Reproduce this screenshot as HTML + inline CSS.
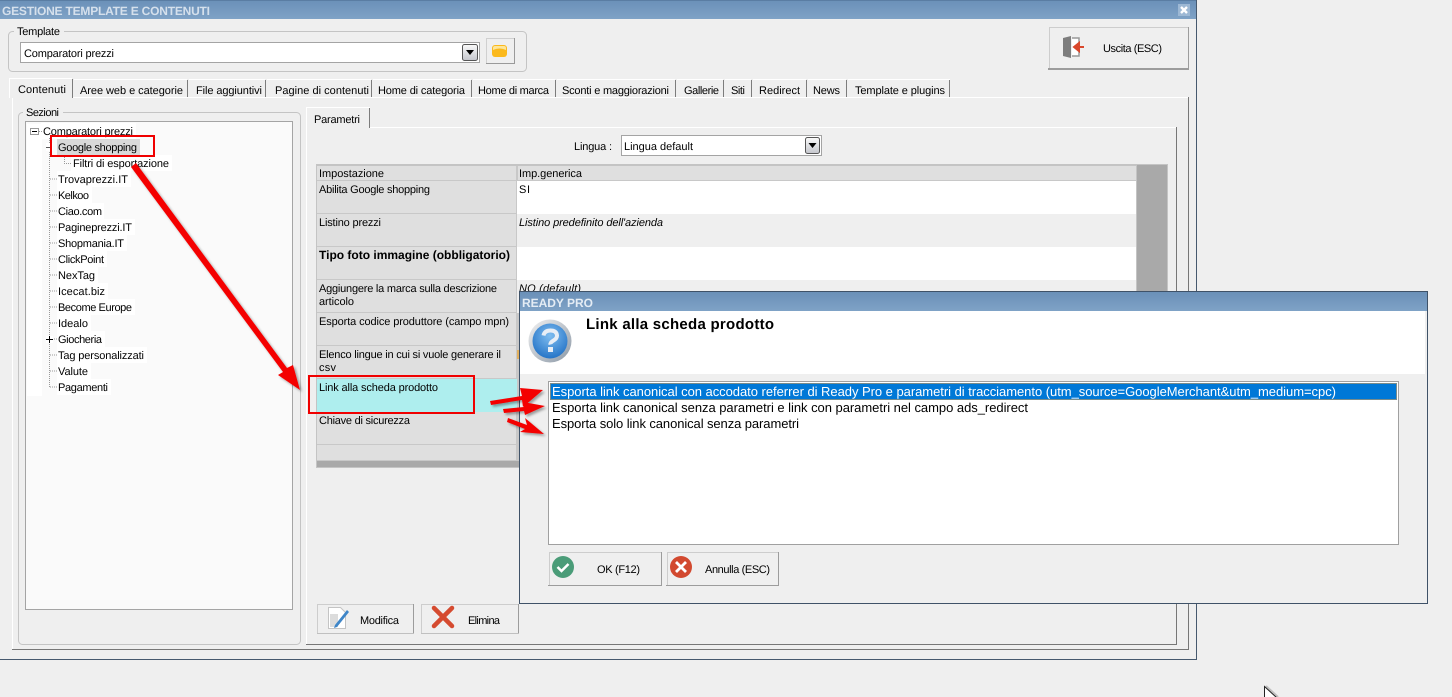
<!DOCTYPE html>
<html><head><meta charset="utf-8"><title>Gestione template e contenuti</title>
<style>
html,body{margin:0;padding:0;background:#efefef;width:1452px;height:697px;overflow:hidden}
svg{display:block}
text{font-family:"Liberation Sans",sans-serif;font-size:11px;fill:#000;text-rendering:geometricPrecision}
.c{shape-rendering:crispEdges}
.b{font-weight:bold}
.i{font-style:italic}
.d{font-size:13px}
</style></head><body>
<svg width="1452" height="697" viewBox="0 0 1452 697" xmlns="http://www.w3.org/2000/svg">
<defs>
<linearGradient id="tb" x1="0" y1="0" x2="0" y2="1"><stop offset="0" stop-color="#6a90b8"/><stop offset="1" stop-color="#7fa2c6"/></linearGradient>
<linearGradient id="cb" x1="0" y1="0" x2="0" y2="1"><stop offset="0" stop-color="#fafafa"/><stop offset="1" stop-color="#c4c6cc"/></linearGradient>
<radialGradient id="q" cx=".5" cy=".35" r=".7"><stop offset="0" stop-color="#7fbdf0"/><stop offset="1" stop-color="#1f6fc4"/></radialGradient>
<linearGradient id="qr" x1="0" y1="0" x2="1" y2="1"><stop offset="0" stop-color="#f2f2f2"/><stop offset="1" stop-color="#8b98a6"/></linearGradient>
<filter id="sh" x="-20%" y="-20%" width="140%" height="140%"><feDropShadow dx="2" dy="2" stdDeviation="1.2" flood-color="#000" flood-opacity=".35"/></filter>
</defs>

<rect width="1452" height="697" fill="#efefef"/>

<!-- main window -->
<rect x="0" y="0" width="1196" height="19" fill="url(#tb)" class="c"/>
<rect x="0" y="0" width="1196" height="1" fill="#5a7da3" class="c"/>
<rect x="1196" y="0" width="1" height="660" fill="#46596e" class="c"/>
<rect x="0" y="659" width="1197" height="1" fill="#46596e" class="c"/>
<text x="2" y="15" class="b" style="font-size:12px;fill:#d5e0ec" textLength="208" lengthAdjust="spacing">GESTIONE TEMPLATE E CONTENUTI</text>
<rect x="1178" y="4" width="12" height="12" fill="#9db8d4" class="c"/>
<path d="M1181 7l6 6M1187 7l-6 6" stroke="#fff" stroke-width="2.4" fill="none"/>

<!-- template group -->
<rect x="8.500" y="31.500" width="518" height="40" rx="4" fill="none" stroke="#c4c4c4"/>
<rect x="14" y="28" width="50" height="8" fill="#efefef" class="c"/>
<text x="17" y="35" textLength="43">Template</text>
<rect x="20.500" y="42.500" width="459" height="20" fill="#fff" stroke="#a4a4a4" class="c"/>
<text x="24" y="57" textLength="90">Comparatori prezzi</text>
<rect x="462.500" y="44.500" width="15" height="16" rx="2" fill="url(#cb)" stroke="#555"/>
<path d="M466 50h8l-4 5z" fill="#000"/>
<rect x="486" y="38" width="29" height="26" fill="#efefef" class="c"/>
<rect x="486" y="38" width="29" height="1" fill="#d0d0d0" class="c"/>
<rect x="486" y="38" width="1" height="26" fill="#d0d0d0" class="c"/>
<rect x="514" y="38" width="1" height="26" fill="#9a9a9a" class="c"/>
<rect x="486" y="63" width="29" height="1" fill="#9a9a9a" class="c"/>
<rect x="492" y="45" width="15" height="12" rx="3" fill="#fbb91c"/>
<path d="M493 50q6.500-3 13 0v-2q0-2-2-2h-9q-2 0-2 2z" fill="#fde69a"/>

<!-- exit button -->
<rect x="1049" y="27" width="140" height="42" fill="#efefef" class="c"/>
<rect x="1049" y="27" width="140" height="1" fill="#cdcdcd" class="c"/>
<rect x="1049" y="27" width="1" height="42" fill="#cdcdcd" class="c"/>
<rect x="1188" y="27" width="1" height="42" fill="#9c9c9c" class="c"/>
<rect x="1048" y="68" width="141" height="2" fill="#9c9c9c" class="c"/>
<path d="M1072 38h7v18h-7" fill="#fff" stroke="#999" stroke-width="1.500"/>
<path d="M1063 38l8-2v22l-8-2z" fill="#7d7d7d"/>
<path d="M1084 47h-7M1079 43l-5 4 5 4z" stroke="#d9472b" stroke-width="2" fill="#d9472b"/>
<text x="1103" y="52" textLength="59">Uscita (ESC)</text>

<!-- outer tab panel -->
<rect x="12" y="97" width="1" height="553" fill="#fff" class="c"/>
<rect x="12" y="97" width="1177" height="1" fill="#fff" class="c"/>
<rect x="1188" y="97" width="1" height="553" fill="#777" class="c"/>
<rect x="12" y="649" width="1177" height="1" fill="#777" class="c"/>

<!-- tabs -->
<g class="c" fill="#fff">
<rect x="74" y="79" width="113" height="1"/><rect x="189" y="79" width="76" height="1"/><rect x="267" y="79" width="104" height="1"/><rect x="373" y="79" width="98" height="1"/><rect x="473" y="79" width="82" height="1"/><rect x="557" y="79" width="118" height="1"/><rect x="677" y="79" width="46" height="1"/><rect x="725" y="79" width="26" height="1"/><rect x="753" y="79" width="53" height="1"/><rect x="808" y="79" width="38" height="1"/><rect x="848" y="79" width="102" height="1"/>
</g>
<g class="c" fill="#7c7c7c">
<rect x="187" y="80" width="1" height="17"/><rect x="265" y="80" width="1" height="17"/><rect x="371" y="80" width="1" height="17"/><rect x="471" y="80" width="1" height="17"/><rect x="555" y="80" width="1" height="17"/><rect x="675" y="80" width="1" height="17"/><rect x="723" y="80" width="1" height="17"/><rect x="751" y="80" width="1" height="17"/><rect x="806" y="80" width="1" height="17"/><rect x="846" y="80" width="1" height="17"/><rect x="949" y="80" width="1" height="17"/>
</g>
<rect x="9" y="78" width="63" height="20" fill="#efefef" class="c"/>
<rect x="9" y="78" width="63" height="1" fill="#fff" class="c"/>
<rect x="9" y="78" width="1" height="20" fill="#fff" class="c"/>
<rect x="72" y="79" width="1" height="19" fill="#7c7c7c" class="c"/>
<text x="18" y="93" textLength="48">Contenuti</text>
<text x="80" y="94" textLength="103">Aree web e categorie</text>
<text x="196" y="94" textLength="66">File aggiuntivi</text>
<text x="275" y="94" textLength="94">Pagine di contenuti</text>
<text x="378" y="94" textLength="87">Home di categoria</text>
<text x="478" y="94" textLength="71">Home di marca</text>
<text x="562" y="94" textLength="107">Sconti e maggiorazioni</text>
<text x="684" y="94" textLength="35">Gallerie</text>
<text x="731" y="94" textLength="14">Siti</text>
<text x="759" y="94" textLength="41">Redirect</text>
<text x="813" y="94" textLength="27">News</text>
<text x="855" y="94" textLength="90">Template e plugins</text>

<!-- Sezioni group -->
<rect x="18.500" y="112.500" width="282" height="532" rx="4" fill="none" stroke="#c4c4c4"/>
<rect x="23" y="108" width="40" height="8" fill="#efefef" class="c"/>
<text x="26" y="116" textLength="33">Sezioni</text>
<rect x="25.500" y="121.500" width="267" height="488" fill="#fafafa" stroke="#a4a4a4" class="c"/>
<rect x="27" y="124" width="15" height="272" fill="#fff" class="c"/>
<g fill="#fff" class="c">
<rect x="41" y="123" width="95" height="16"/><rect x="71" y="155" width="101" height="16"/><rect x="57" y="171" width="74" height="16"/><rect x="57" y="187" width="35" height="16"/><rect x="57" y="203" width="47" height="16"/><rect x="57" y="219" width="78" height="16"/><rect x="57" y="235" width="70" height="16"/><rect x="57" y="251" width="50" height="16"/><rect x="57" y="267" width="41" height="16"/><rect x="57" y="283" width="51" height="16"/><rect x="57" y="299" width="78" height="16"/><rect x="57" y="315" width="34" height="16"/><rect x="57" y="331" width="48" height="16"/><rect x="57" y="347" width="90" height="16"/><rect x="57" y="363" width="34" height="16"/><rect x="57" y="379" width="54" height="16"/>
</g>
<rect x="57" y="139" width="83" height="16" fill="#d9d9d9" class="c"/>
<path d="M49.500 138V387M50 179h7M50 195h7M50 211h7M50 227h7M50 243h7M50 259h7M50 275h7M50 291h7M50 307h7M50 323h7M50 339h7M50 355h7M50 371h7M50 387h7M39 131.500h4M64.500 155v8M64 163.500h8" stroke="#999" stroke-dasharray="1 1" fill="none" class="c"/>
<rect x="30.500" y="128.500" width="8" height="6" fill="#fff" stroke="#999" class="c"/>
<path d="M32 131.500h5" stroke="#000" class="c"/>
<rect x="46" y="143" width="7" height="8" fill="#fff" class="c"/>
<path d="M46 147.500h6" stroke="#555" class="c"/>
<rect x="46" y="336" width="7" height="7" fill="#fff" class="c"/>
<path d="M46 339.500h7M49.500 336v7" stroke="#000" class="c"/>
<text x="43" y="135" textLength="90">Comparatori prezzi</text>
<text x="58" y="151" textLength="79">Google shopping</text>
<text x="73" y="167" textLength="96">Filtri di esportazione</text>
<text x="58" y="183" textLength="70">Trovaprezzi.IT</text>
<text x="58" y="199" textLength="31">Kelkoo</text>
<text x="58" y="215" textLength="44">Ciao.com</text>
<text x="58" y="231" textLength="74">Pagineprezzi.IT</text>
<text x="58" y="247" textLength="66">Shopmania.IT</text>
<text x="58" y="263" textLength="46">ClickPoint</text>
<text x="58" y="279" textLength="37">NexTag</text>
<text x="58" y="295" textLength="47">Icecat.biz</text>
<text x="58" y="311" textLength="74">Become Europe</text>
<text x="58" y="327" textLength="30">Idealo</text>
<text x="58" y="343" textLength="44">Giocheria</text>
<text x="58" y="359" textLength="86">Tag personalizzati</text>
<text x="58" y="375" textLength="30">Valute</text>
<text x="58" y="391" textLength="50">Pagamenti</text>

<!-- inner tab -->
<rect x="306" y="127" width="870" height="1" fill="#fff" class="c"/>
<rect x="306" y="127" width="1" height="518" fill="#fff" class="c"/>
<rect x="1176" y="127" width="1" height="518" fill="#777" class="c"/>
<rect x="306" y="644" width="871" height="1" fill="#777" class="c"/>
<rect x="306" y="107" width="64" height="21" fill="#efefef" class="c"/>
<rect x="306" y="107" width="64" height="1" fill="#fff" class="c"/>
<rect x="306" y="107" width="1" height="21" fill="#fff" class="c"/>
<rect x="369" y="108" width="1" height="20" fill="#7c7c7c" class="c"/>
<text x="314" y="123" textLength="46">Parametri</text>

<!-- lingua -->
<text x="574" y="150" textLength="38">Lingua :</text>
<rect x="621.500" y="135.500" width="200" height="20" fill="#fff" stroke="#a4a4a4" class="c"/>
<text x="624" y="150" textLength="69">Lingua default</text>
<rect x="805.500" y="137.500" width="14" height="16" rx="2" fill="url(#cb)" stroke="#555"/>
<path d="M808.500 143h8l-4 5z" fill="#000"/>

<!-- table -->
<rect x="316" y="164" width="852" height="304" fill="#c4c4c4" class="c"/>
<rect x="317" y="166" width="819" height="295" fill="#c8c8c8" class="c"/>
<g fill="#dfdfdf" class="c">
<rect x="317" y="166" width="199" height="14"/><rect x="518" y="166" width="618" height="14"/>
<rect x="317" y="181" width="199" height="32"/><rect x="317" y="214" width="199" height="32"/><rect x="317" y="247" width="199" height="32"/><rect x="317" y="280" width="199" height="32"/><rect x="317" y="313" width="199" height="32"/><rect x="317" y="346" width="199" height="32"/><rect x="317" y="412" width="199" height="32"/><rect x="317" y="445" width="199" height="15"/>
</g>
<rect x="317" y="379" width="200" height="33" fill="#aeeeee" class="c"/>
<rect x="517" y="181" width="619" height="33" fill="#fff" class="c"/>
<rect x="517" y="214" width="619" height="33" fill="#efefef" class="c"/>
<rect x="517" y="247" width="619" height="33" fill="#fff" class="c"/>
<rect x="517" y="280" width="619" height="33" fill="#efefef" class="c"/>
<rect x="517" y="350" width="2" height="9" fill="#e0b060" class="c"/>
<rect x="1137" y="165" width="30" height="302" fill="#a9a9a9" class="c"/>
<rect x="317" y="461" width="850" height="6" fill="#a9a9a9" class="c"/>
<text x="319" y="177" textLength="65">Impostazione</text>
<text x="519" y="177" textLength="63">Imp.generica</text>
<text x="319" y="193" textLength="111">Abilita Google shopping</text>
<text x="519" y="193" textLength="11">SI</text>
<text x="319" y="226" textLength="62">Listino prezzi</text>
<text x="519" y="226" class="i" textLength="144">Listino predefinito dell'azienda</text>
<text x="319" y="259" class="b" style="font-size:12px" textLength="191">Tipo foto immagine (obbligatorio)</text>
<text x="319" y="292" textLength="178">Aggiungere la marca sulla descrizione</text>
<text x="319" y="305" textLength="35">articolo</text>
<text x="519" y="292" class="i" textLength="62">NO (default)</text>
<text x="319" y="325" textLength="190">Esporta codice produttore (campo mpn)</text>
<text x="319" y="358" textLength="182">Elenco lingue in cui si vuole generare il</text>
<text x="319" y="371" textLength="17">csv</text>
<text x="319" y="391" textLength="119">Link alla scheda prodotto</text>
<text x="319" y="424" textLength="91">Chiave di sicurezza</text>

<!-- modifica / elimina -->
<rect x="317" y="604" width="97" height="30" fill="#efefef" class="c"/>
<rect x="317" y="604" width="97" height="1" fill="#cdcdcd" class="c"/>
<rect x="317" y="604" width="1" height="30" fill="#cdcdcd" class="c"/>
<rect x="413" y="604" width="1" height="30" fill="#9c9c9c" class="c"/>
<rect x="317" y="633" width="97" height="1" fill="#c0c0c0" class="c"/>
<rect x="421" y="604" width="98" height="30" fill="#efefef" class="c"/>
<rect x="421" y="604" width="98" height="1" fill="#cdcdcd" class="c"/>
<rect x="421" y="604" width="1" height="30" fill="#cdcdcd" class="c"/>
<rect x="518" y="604" width="1" height="30" fill="#9c9c9c" class="c"/>
<rect x="421" y="633" width="98" height="1" fill="#c0c0c0" class="c"/>
<path d="M328.500 607.500h12l5 5v16h-17z" fill="#fff" stroke="#c4c4c4"/>
<rect x="330" y="614" width="8" height="13" fill="#dcdcdc" class="c"/>
<path d="M335 625l-1 3 3-1 12-15-2-2z" fill="#3f86c8"/>
<path d="M434 608l9 9m9-9l-9 9m0 0l-9 9m9-9l9 9" stroke="#d54b30" stroke-width="4.500" stroke-linecap="round" fill="none"/>
<text x="360" y="624" textLength="39">Modifica</text>
<text x="468" y="624" textLength="32">Elimina</text>

<!-- dialog -->
<rect x="519" y="291" width="909" height="313" fill="#3f5268" class="c"/>
<rect x="520" y="292" width="907" height="311" fill="#efefef" class="c"/>
<rect x="520" y="292" width="907" height="19" fill="url(#tb)" class="c"/>
<rect x="520" y="311" width="905" height="63" fill="#fff" class="c"/>
<text x="522" y="307" class="b" style="font-size:12px;fill:#e4ecf4" textLength="71">READY PRO</text>
<circle cx="550" cy="341" r="21.500" fill="url(#qr)"/>
<circle cx="550" cy="341" r="17.500" fill="url(#q)"/>
<path d="M543.500 335.500q1-5 7-5t6.500 5q0 3-3.500 5t-3 4" stroke="#e8eef6" stroke-width="4" fill="none"/>
<rect x="548" y="347" width="5" height="5" fill="#e8eef6"/>
<text x="586" y="329" class="b" style="font-size:15px" textLength="188">Link alla scheda prodotto</text>

<rect x="548.500" y="381.500" width="850" height="163" fill="#fff" stroke="#a0a0a0" class="c"/>
<rect x="550" y="383" width="847" height="17" fill="#0078d7" class="c"/>
<rect x="550.500" y="383.500" width="846" height="16" fill="none" stroke="#f0a040" stroke-dasharray="1 1" class="c"/>
<text x="552" y="396" class="d" style="fill:#fff" textLength="784">Esporta link canonical con accodato referrer di Ready Pro e parametri di tracciamento (utm_source=GoogleMerchant&amp;utm_medium=cpc)</text>
<text x="552" y="412" class="d" textLength="476">Esporta link canonical senza parametri e link con parametri nel campo ads_redirect</text>
<text x="552" y="428" class="d" textLength="247">Esporta solo link canonical senza parametri</text>

<rect x="549" y="552" width="113" height="34" fill="#efefef" class="c"/>
<rect x="549" y="552" width="113" height="1" fill="#cdcdcd" class="c"/>
<rect x="549" y="552" width="1" height="34" fill="#cdcdcd" class="c"/>
<rect x="661" y="552" width="1" height="34" fill="#9c9c9c" class="c"/>
<rect x="548" y="585" width="114" height="1" fill="#9c9c9c" class="c"/>
<rect x="667" y="552" width="112" height="34" fill="#efefef" class="c"/>
<rect x="667" y="552" width="112" height="1" fill="#cdcdcd" class="c"/>
<rect x="667" y="552" width="1" height="34" fill="#cdcdcd" class="c"/>
<rect x="778" y="552" width="1" height="34" fill="#9c9c9c" class="c"/>
<rect x="666" y="585" width="113" height="1" fill="#9c9c9c" class="c"/>
<circle cx="563" cy="567" r="11" fill="#4a9c78"/>
<path d="M557.500 567l4 4 7-7" stroke="#fff" stroke-width="2.500" fill="none"/>
<circle cx="681" cy="567" r="11" fill="#d2492f"/>
<path d="M676 562l10 10m0-10l-10 10" stroke="#fff" stroke-width="2.800" fill="none"/>
<text x="597" y="573" textLength="43">OK (F12)</text>
<text x="705" y="573" textLength="65">Annulla (ESC)</text>

<!-- red annotations -->
<rect x="51" y="136" width="103" height="20" fill="none" stroke="#f00000" stroke-width="2" class="c"/>
<rect x="309" y="376" width="165" height="37" fill="none" stroke="#f00000" stroke-width="2" class="c"/>
<g fill="#f40000" filter="url(#sh)">
<path d="M131 167l5-4 151 205 6-3 7 25-22-15 5-3z"/>
<path d="M490 401l32-5-2-8 23 2-20 17-1-7-31 5z"/>
<path d="M503 409l21-2-1-5 22 4-20 9-1-4-20 2z"/>
<path d="M508 418l19 7-2-7 19 16-24-2 5-3-18-7z"/>
</g>

<!-- cursor -->
<path d="M1264.500 686.500v11h12z" fill="#fff" stroke="#222"/>
<path d="M1266 686l12 11" stroke="#000" stroke-opacity=".2" stroke-width="2" fill="none"/>
</svg>
</body></html>
